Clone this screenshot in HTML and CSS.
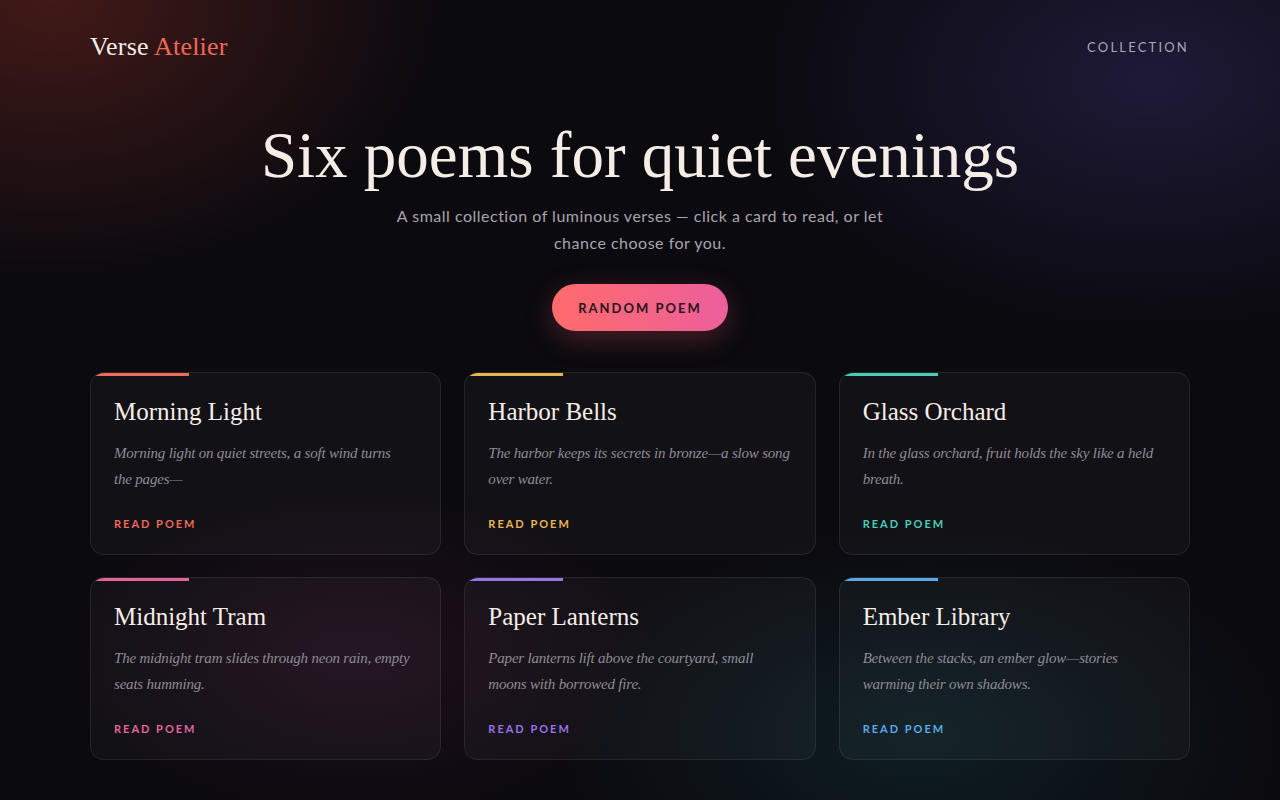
FILE: index.html
```html
<!DOCTYPE html>
<html lang="en">
<head>
    <meta charset="UTF-8">
    <meta name="viewport" content="width=device-width, initial-scale=1.0">
    <title>Verse Atelier</title>
    <link rel="stylesheet" href="styles.css">
</head>
<body>

    <header class="topbar">
        <div class="logo">Verse <span>Atelier</span></div>
        <nav class="nav">COLLECTION</nav>
    </header>

    <section class="hero">
        <h1>Six poems for quiet evenings</h1>
        <p>A small collection of luminous verses — click a card to read, or let chance choose for you.</p>
        <button class="btn-random">RANDOM POEM</button>
    </section>

    <main class="grid">
        <article class="card coral">
            <h2>Morning Light</h2>
            <p>Morning light on quiet streets, a soft wind turns the&nbsp;pages—</p>
            <a class="read">READ POEM</a>
        </article>
        <article class="card gold">
            <h2>Harbor Bells</h2>
            <p>The harbor keeps its secrets in bronze—a slow song over water.</p>
            <a class="read">READ POEM</a>
        </article>
        <article class="card teal">
            <h2>Glass Orchard</h2>
            <p>In the glass orchard, fruit holds the sky like a held breath.</p>
            <a class="read">READ POEM</a>
        </article>
        <article class="card pink">
            <h2>Midnight Tram</h2>
            <p>The midnight tram slides through neon rain, empty seats humming.</p>
            <a class="read">READ POEM</a>
        </article>
        <article class="card violet">
            <h2>Paper Lanterns</h2>
            <p>Paper lanterns lift above the courtyard, small moons with borrowed fire.</p>
            <a class="read">READ POEM</a>
        </article>
        <article class="card blue">
            <h2>Ember Library</h2>
            <p>Between the stacks, an ember glow—stories warming their own shadows.</p>
            <a class="read">READ POEM</a>
        </article>
    </main>

</body>
</html>
```

FILE: styles.css
```css
body {
    margin: 0;
    min-height: 800px;
    font-family: Lato, "Noto Sans", sans-serif;
    color: #f4ede6;
    background-color: #0b0a0f;
    background-image:
        radial-gradient(ellipse 560px 400px at 4% 0%, rgba(110, 38, 30, 0.55), transparent 70%),
        radial-gradient(ellipse 560px 360px at 90% 10%, rgba(55, 45, 105, 0.45), transparent 70%),
        radial-gradient(ellipse 420px 240px at 28% 82%, rgba(90, 30, 70, 0.25), transparent 70%),
        radial-gradient(ellipse 520px 300px at 72% 92%, rgba(20, 80, 85, 0.28), transparent 70%);
}

.topbar {
    display: flex;
    justify-content: space-between;
    align-items: center;
    padding: 32px 91px 0 90px;
    height: 30px;
}
.logo {
    font-family: "Liberation Serif", serif;
    font-size: 26px;
    letter-spacing: 0.2px;
    color: #f4ede6;
}
.logo span {
    color: #f0675b;
}
.nav {
    font-size: 13px;
    letter-spacing: 2.2px;
    color: #a9a6b6;
}

.hero {
    text-align: center;
    margin-top: 58px;
}
.hero h1 {
    font-family: "Liberation Serif", serif;
    font-weight: normal;
    font-size: 65px;
    line-height: 70px;
    margin: 0;
    color: #f6eee6;
}
.hero p {
    max-width: 500px;
    margin: 12px auto 0;
    font-size: 16px;
    line-height: 27px;
    letter-spacing: 0.5px;
    color: #a8a5ae;
}
.btn-random {
    margin-top: 28px;
    width: 176px;
    height: 47px;
    border: none;
    border-radius: 24px;
    background: linear-gradient(90deg, #ff6b6b, #ec5f9c);
    color: #2a1520;
    font-family: Lato, sans-serif;
    font-size: 13px;
    font-weight: 700;
    letter-spacing: 2px;
    cursor: pointer;
    box-shadow: 0 8px 28px rgba(255, 100, 110, 0.25);
}

.grid {
    display: grid;
    grid-template-columns: repeat(3, 1fr);
    gap: 22px 23px;
    width: 1100px;
    margin: 41px auto 0;
}
.card {
    position: relative;
    overflow: hidden;
    height: 183px;
    box-sizing: border-box;
    padding: 23px 23px 0;
    border: 1px solid rgba(255, 255, 255, 0.08);
    border-radius: 14px;
    background: rgba(255, 255, 255, 0.03);
}
.card::before {
    content: "";
    position: absolute;
    left: 0;
    top: 0;
    width: 98px;
    height: 3px;
    background: var(--accent);
}
.card h2 {
    font-family: "Liberation Serif", serif;
    font-weight: normal;
    font-size: 25px;
    line-height: 31px;
    margin: 0;
    color: #f6eee6;
}
.card p {
    font-family: "Liberation Serif", serif;
    font-style: italic;
    font-size: 15px;
    line-height: 26px;
    letter-spacing: -0.2px;
    color: #8e8b95;
    margin: 13px 0 0;
    height: 52px;
}
.read {
    display: block;
    margin-top: 24px;
    font-size: 11px;
    line-height: 16px;
    font-weight: 700;
    letter-spacing: 2px;
    color: var(--accent);
    cursor: pointer;
}

.coral { --accent: #f0675b; }
.gold { --accent: #e6b655; }
.teal { --accent: #45cdb9; }
.pink { --accent: #e4649c; }
.violet { --accent: #9873ea; }
.blue { --accent: #5aa9ea; }
```
